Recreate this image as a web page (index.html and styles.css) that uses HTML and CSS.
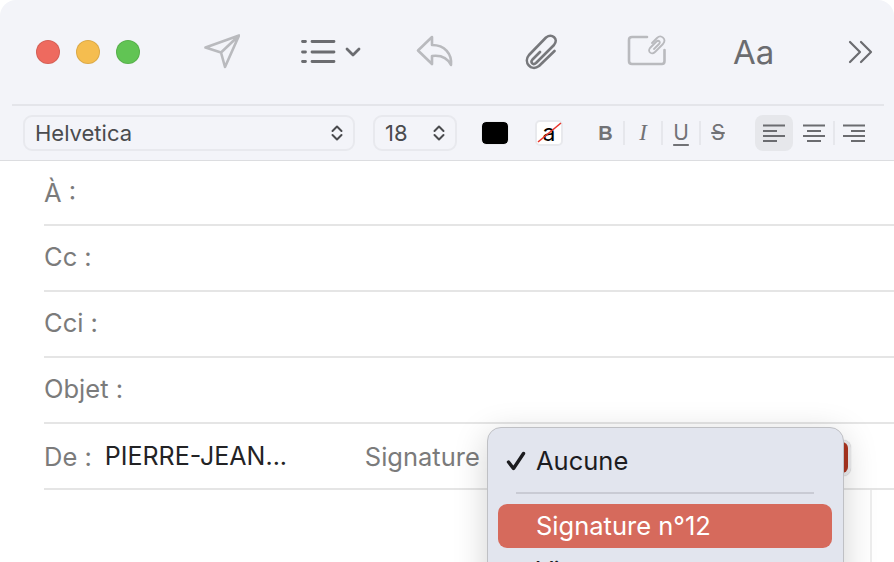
FILE: index.html
```html
<!DOCTYPE html>
<html lang="fr">
<head>
    <meta charset="UTF-8">
    <meta name="viewport" content="width=device-width, initial-scale=1.0">
    <title>Nouveau message</title>
    <link rel="stylesheet" href="styles.css">
</head>
<body>

<div class="window">
    <div class="toolbar">
        <div class="lights">
            <span class="light red"></span>
            <span class="light yellow"></span>
            <span class="light green"></span>
        </div>
        <svg class="tool tool-send" width="36" height="36" viewBox="0 0 36 36">
            <path class="line-off" d="M1.5 13.5 L35 1.5 L21 33 L17 18.5 Z M17 18.500 L35 1.500"/>
        </svg>
        <svg class="tool tool-list" width="62" height="26" viewBox="0 0 62 26">
            <path class="line-dark" d="M2.500 2.500h3M2.500 13h3M2.500 22.500h3M12 2.500h22M12 13h22M12 22.500h22"/>
            <path class="line-dark" d="M47 10l6 6l6-6"/>
        </svg>
        <svg class="tool tool-reply" width="38" height="36" viewBox="0 0 38 36">
            <path class="line-off" d="M16 3 L2 16.500 L16 30 V22 C24 21 31 23 35 31 C36 20 29 11 16 11 Z"/>
        </svg>
        <svg class="tool tool-clip" width="34" height="36" viewBox="0 0 34 36">
            <path class="line-mid" d="M16 18 L8.500 25.500 C6 28.500 9 31.500 12 29 L30 11 C35 5 28 -1 22 3.500 L5 21 C-1 28 7 38 15 32 L30.500 17"/>
        </svg>
        <svg class="tool tool-compose" width="40" height="34" viewBox="0 0 40 34">
            <path class="line-off" d="M20 2H5Q2 2 2 5V26q0 3 3 3H35q2.500 0 2.500-3V15"/>
            <path class="line-thin" d="M27 14 L32 9 C34 7 31.500 4.500 29.500 6.500 L23 13 C20 17 25 20 28 17 L36 9 C40 4 34 -1 30 3 L25 8"/>
        </svg>
        <span class="tool tool-font">Aa</span>
        <svg class="tool tool-more" width="26" height="26" viewBox="0 0 26 26">
            <path class="line-dark thin" d="M2 3L12 13L2 23M13 3L23 13L13 23"/>
        </svg>
    </div>

    <div class="formatbar">
        <div class="select select-font">
            <span>Helvetica</span>
            <svg width="12" height="18" viewBox="0 0 12 18"><path class="line-chevron" d="M1.500 7L6 2.500L10.500 7M1.500 11L6 15.500L10.500 11"/></svg>
        </div>
        <div class="select select-size">
            <span>18</span>
            <svg width="12" height="18" viewBox="0 0 12 18"><path class="line-chevron" d="M1.500 7L6 2.500L10.500 7M1.500 11L6 15.500L10.500 11"/></svg>
        </div>
        <span class="swatch swatch-black"></span>
        <span class="swatch swatch-none">
            a
            <svg class="strike-red" width="26" height="24" viewBox="0 0 26 24"><path d="M2 22L25 3"/></svg>
        </span>
        <div class="styles">
            <b class="style-btn">B</b>
            <i class="style-btn">I</i>
            <u class="style-btn">U</u>
            <s class="style-btn">S</s>
        </div>
        <div class="aligns">
            <span class="align on">
                <svg width="22" height="18" viewBox="0 0 22 18"><path d="M0 1.500h22M0 7h14M0 12h22M0 17h14"/></svg>
            </span>
            <span class="align">
                <svg width="22" height="18" viewBox="0 0 22 18"><path d="M0 1.500h22M4 7h14M0 12h22M4 17h14"/></svg>
            </span>
            <span class="align last">
                <svg width="22" height="18" viewBox="0 0 22 18"><path d="M0 1.500h22M8 7h14M0 12h22M8 17h14"/></svg>
            </span>
        </div>
    </div>

    <div class="fields">
        <div class="field"><span class="label">À :</span></div>
        <div class="field"><span class="label">Cc :</span></div>
        <div class="field"><span class="label">Cci :</span></div>
        <div class="field"><span class="label">Objet :</span></div>
        <div class="field field-from">
            <span class="label">De :</span>
            <span class="from-value">PIERRE-JEAN...</span>
            <span class="label sig-label">Signature</span>
            <span class="sig-select"><span class="sig-tip"></span></span>
        </div>
    </div>

    <div class="body-area"><div class="scroll-line"></div></div>

    <div class="menu">
        <div class="menu-item">
            <svg class="check" width="20" height="20" viewBox="0 0 20 20"><path d="M2.500 11L7.500 17.500L17.500 2.500"/></svg>
            Aucune
        </div>
        <div class="menu-sep"></div>
        <div class="menu-item active">Signature n°12</div>
        <div class="menu-item next">Vie</div>
    </div>
</div>

</body>
</html>
```

FILE: styles.css
```css
* {
    box-sizing: border-box;
}
html, body {
    height: 100%;
}
body {
    margin: 0;
    overflow: hidden;
    background: #fff;
    font-family: Inter, "Liberation Sans", sans-serif;
}
.window {
    position: relative;
    height: 562px;
    overflow: hidden;
}

/* top toolbar */
.toolbar {
    height: 106px;
    background: #f3f4f9;
    border-radius: 16px 16px 0 0;
    display: flex;
    align-items: center;
    padding: 0 0 2px 36px;
    position: relative;
}
.toolbar::after {
    content: "";
    position: absolute;
    left: 12px;
    right: 10px;
    bottom: 0;
    height: 2px;
    background: #e4e5ea;
}
.lights {
    display: flex;
    gap: 16px;
}
.light {
    width: 24px;
    height: 24px;
    border-radius: 50%;
    border: 1px solid rgba(0, 0, 0, 0.1);
}
.red { background: #ee6a5f; }
.yellow { background: #f5bd4f; }
.green { background: #61c454; }

.tool { flex: none; }
.tool-send { margin-left: 64px; }
.tool-list { margin-left: 60px; }
.tool-reply { margin-left: 54px; }
.tool-clip { margin-left: 70px; }
.tool-compose { margin-left: 69px; }
.tool-font {
    margin-left: 66px;
    width: 40px;
    font-size: 33px;
    color: #6b6c70;
}
.tool-more { margin-left: 75px; }

.toolbar svg path {
    fill: none;
    stroke-linecap: round;
    stroke-linejoin: round;
}
.toolbar svg .line-off { stroke: #b9babe; stroke-width: 2.6; }
.toolbar svg .line-thin { stroke: #b9babe; stroke-width: 1.8; }
.toolbar svg .line-mid { stroke: #77787c; stroke-width: 2.6; }
.toolbar svg .line-dark { stroke: #6b6c70; stroke-width: 2.8; }
.toolbar svg .thin { stroke-width: 2.2; }

/* format bar */
.formatbar {
    height: 55px;
    background: #f3f4f9;
    border-bottom: 1px solid #dcdde0;
    display: flex;
    align-items: center;
    padding: 0 0 0 23px;
}
.select {
    height: 36px;
    border: 2px solid #e8e9ee;
    border-radius: 9px;
    display: flex;
    align-items: center;
    justify-content: space-between;
    padding: 0 10px 0 10px;
    font-size: 22px;
    color: #4a4b4e;
}
.select svg { flex: none; }
.select-font { width: 332px; }
.select-size { width: 84px; margin-left: 18px; }
.line-chevron {
    fill: none;
    stroke: #4a4b4e;
    stroke-width: 2;
    stroke-linecap: round;
    stroke-linejoin: round;
}
.swatch {
    width: 28px;
    height: 26px;
    border-radius: 5px;
    flex: none;
}
.swatch-black {
    margin-left: 24px;
    height: 24px;
    background: #000;
    background-clip: padding-box;
    border: 1px solid #ebecf0;
}
.swatch-none {
    margin-left: 26px;
    background: #fff;
    position: relative;
    font-size: 23px;
    line-height: 22px;
    text-align: center;
    color: #000;
    border: 2px solid #e8e9ed;
}
.strike-red {
    position: absolute;
    left: -1px;
    top: -2px;
}
.strike-red path {
    stroke: #e8352c;
    stroke-width: 1.6;
    fill: none;
}
.styles {
    display: flex;
    margin-left: 25px;
}
.style-btn {
    width: 38px;
    height: 24px;
    line-height: 24px;
    text-align: center;
    font-size: 21px;
    color: #717276;
    border-right: 2px solid #e6e7ec;
    flex: none;
    text-underline-offset: 4px;
}
.styles .style-btn:first-child { width: 37px; font-family: "Liberation Sans", sans-serif; font-size: 20px; }
.styles .style-btn:last-child { border-right: none; width: 34px; }
.styles i.style-btn { font-family: "Liberation Serif", serif; font-size: 23px; }
.aligns {
    display: flex;
    align-items: center;
    margin-left: 20px;
}
.align {
    width: 38px;
    height: 36px;
    border-radius: 8px;
    display: flex;
    align-items: center;
    justify-content: center;
    position: relative;
}
.align.on { background: #e6e7eb; }
.align + .align { margin-left: 2px; }
.align.last::before {
    content: "";
    position: absolute;
    left: -2px;
    top: 6px;
    height: 24px;
    width: 2px;
    background: #e6e7ec;
}
.align svg path {
    fill: none;
    stroke: #6b6c70;
    stroke-width: 1.8;
}

/* address fields */
.fields {
    padding-left: 44px;
}
.field {
    height: 66px;
    border-bottom: 2px solid #e5e5e5;
    display: flex;
    align-items: center;
    font-size: 25.5px;
    padding: 0 0 3px 0;
}
.fields .field:first-child {
    height: 65px;
    padding-bottom: 1px;
}
.label {
    color: #7b7b7b;
}
.field-from {
    padding-bottom: 0;
    position: relative;
}
.from-value {
    margin-left: 13px;
    font-size: 25px;
    color: #232325;
    width: 260px;
    flex: none;
}
.sig-select {
    position: absolute;
    left: 500px;
    top: 16px;
    width: 307px;
    height: 36px;
    border-radius: 8px;
    background: #ececee;
    box-shadow: 0 0 1px rgba(0, 0, 0, 0.3);
}
.sig-tip {
    position: absolute;
    right: 3px;
    top: 2px;
    bottom: 3px;
    width: 30px;
    border-radius: 6px;
    background: #ad3520;
}

.body-area {
    height: 72px;
    position: relative;
}
.scroll-line {
    position: absolute;
    left: 870px;
    top: 0;
    bottom: 0;
    width: 2px;
    background: #eeeeee;
}

/* signature dropdown */
.menu {
    position: absolute;
    left: 487px;
    top: 427px;
    width: 357px;
    height: 190px;
    padding: 11px 11px 10px 10px;
    border: 1px solid #bfc0c4;
    border-radius: 14px;
    background: #e2e5ee;
    box-shadow: 0 8px 34px rgba(0, 0, 0, 0.18);
    font-size: 25.5px;
    color: #1c1c1f;
}
.menu-item {
    height: 44px;
    line-height: 44px;
    padding-left: 38px;
    position: relative;
    border-radius: 9px;
}
.menu-item.active {
    background: #d66a5c;
    color: #fff;
}
.menu-item.next {
    margin-top: 1px;
}
.check {
    position: absolute;
    left: 8px;
    top: 12px;
}
.check path {
    fill: none;
    stroke: #1c1c1f;
    stroke-width: 3.4;
    stroke-linecap: round;
    stroke-linejoin: round;
}
.menu-sep {
    height: 2px;
    margin: 9px 18px 10px;
    background: #c9cbd4;
}
```
